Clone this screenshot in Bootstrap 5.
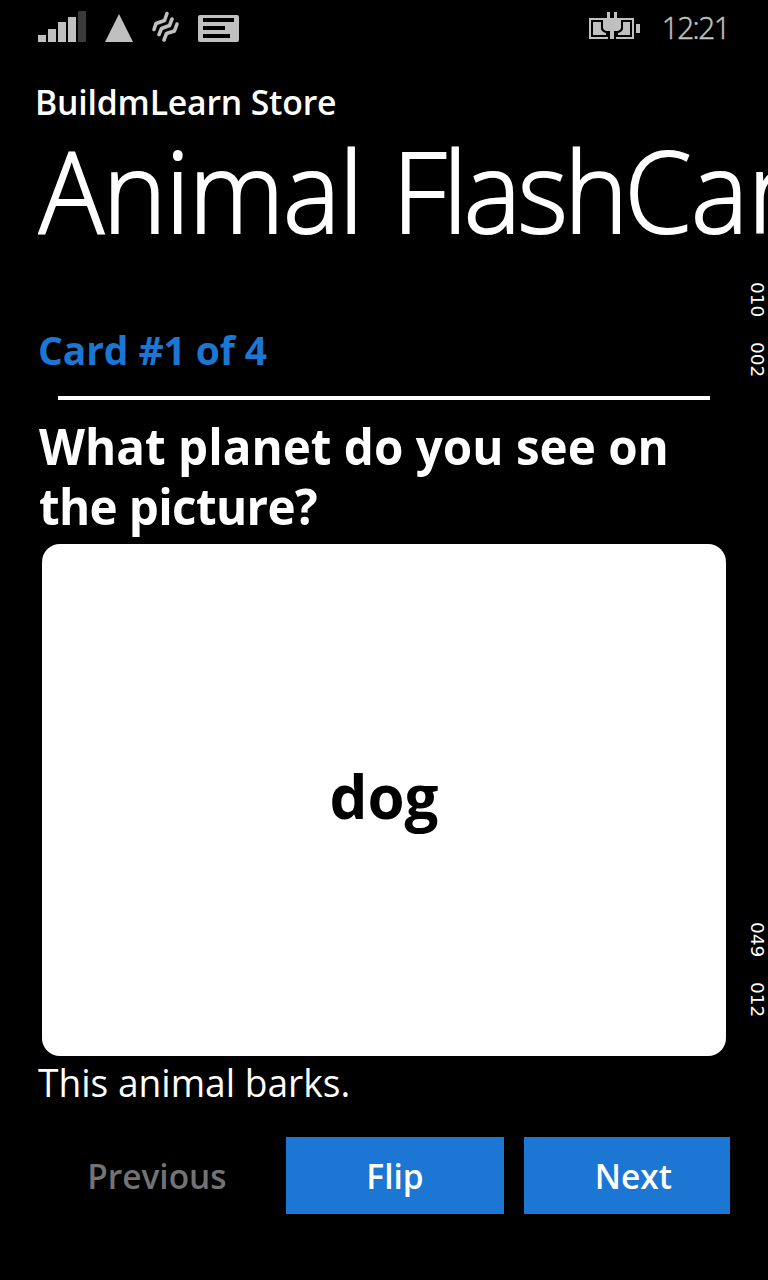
<!DOCTYPE html>
<html lang="en">
<head>
<meta charset="utf-8">
<meta name="viewport" content="width=device-width, initial-scale=1">
<title>BuildmLearn Store</title>
<link rel="stylesheet" href="https://cdn.jsdelivr.net/npm/bootstrap@5.3.0/dist/css/bootstrap.min.css">
<style>
body{background:#000;color:#fff;font-family:"Open Sans","Noto Sans",sans-serif}
.phone{width:768px;height:1280px}
.status-bar{height:54px;padding:0 40px 0 38px;color:#c0c0c0}
.clock{width:68px;margin-left:18px;font-size:31px;line-height:54px;font-weight:300;letter-spacing:-1.6px;-webkit-text-stroke:.5px #c0c0c0;transform:translateX(-1px) scaleX(.96);transform-origin:right}
.app-name{margin:28px 0 0 35px;font-size:35px;line-height:40px;font-weight:600;letter-spacing:-.2px;transform:scaleX(.965);transform-origin:left}
.page-title{margin:8px 0 0 39px;font-size:112px;line-height:120px;font-weight:300;letter-spacing:-1.2px;word-spacing:3px;-webkit-text-stroke:2px #fff;transform:scaleX(.965);transform-origin:left}
.page-title .tight{letter-spacing:-3.7px}
.page-title .loose{letter-spacing:-.5px}
.counter{margin:75px 0 0 38px;font-size:39px;line-height:50px;font-weight:700;color:#1b76d4;letter-spacing:-.1px}
.rule{margin:21px 58px 0;height:4px;background:#fff}
.question{margin:15px 0 0 39px;font-size:51px;line-height:60px;font-weight:700;transform:scaleX(.933);transform-origin:left}
.question .tight{letter-spacing:-.7px}
.flash{margin:9px 42px 0;padding-bottom:9px;height:512px;border-radius:18px;color:#000;font-size:60px;font-weight:700}
.hint{margin:0 0 0 38px;font-size:39px;line-height:51px;font-weight:400;transform:scaleX(.952);transform-origin:left}
.actions{margin:30px 38px 0;gap:20px}
.actions .btn{height:77px;padding:0;border:0;border-radius:0;font-size:35px;font-weight:600;line-height:76px}
.actions .btn span{display:inline-block;transform:scaleX(.955)}
.btn-tile,.btn-tile:hover{background:#1b76d4;color:#fff}
.btn-off:disabled{color:#737373;opacity:1}
.actions .w-prev{width:228px;padding-left:10px}
.w-flip{width:218px}
.actions .w-next{width:206px;padding-left:12px}
.counters{top:282px;right:1px;writing-mode:vertical-rl;font-family:"DejaVu Sans",sans-serif;font-size:18.5px;line-height:20px}
.counters span{position:absolute;right:0}
</style>
</head>
<body>
<div class="phone position-relative overflow-hidden">
  <div class="status-bar d-flex justify-content-between">
    <svg width="204" height="54" viewBox="38 0 204 54" fill="#c0c0c0">
      <path d="M38 35h8v7h-8zM48 29h8v13h-8zM58 22h8v20h-8zM68 17h8v25h-8z"/>
      <path fill="#3a3a3a" d="M78 11h8v31h-8z"/>
      <path d="M119 14L133 42H105z"/>
      <g fill="none" stroke="#c0c0c0" stroke-width="3.600" stroke-linecap="round" stroke-linejoin="round">
        <path d="M154 29.500L156 23.500L164.500 20.500L167 13.500M159 34.500L161.500 28.500L169.500 25.500L172 19M164 40L166.500 33.500L174.500 31L177 24"/>
      </g>
      <path fill-rule="evenodd" d="M200 15h37q2 0 2 2v23q0 2-2 2h-37q-2 0-2-2V17q0-2 2-2zM203 18v4h31v-4zM203 26v4h22v-4zM203 34v4h27v-4z"/>
    </svg>
    <div class="d-flex">
      <svg width="54" height="54" viewBox="588 0 54 54" fill="#c0c0c0">
        <path d="M589 18h14v2h-12v17h17v2h-19zM621 18h13v21h-18v-2h16V20h-11zM636 24h4v9h-4z"/>
        <path d="M593 22h8v7q1 3 5 4v2h-13zM630 22h-7v7q-1 3-5 4v2h12zM607 12h3v6h4v-6h3v6h4v10q-1 3-4 3h-3v8h-4v-8h-3q-3 0-4-3v-10h4z"/>
      </svg>
      <div class="clock text-end">12:21</div>
    </div>
  </div>
  <div class="app-name">BuildmLearn Store</div>
  <h1 class="page-title text-nowrap mb-0">Animal <span class="tight">Flash</span><span class="loose">Cards</span></h1>
  <div class="counter">Card #1 of 4</div>
  <div class="rule"></div>
  <h2 class="question mb-0">What planet do you see on<br><span class="tight">the picture?</span></h2>
  <div class="flash bg-white d-flex align-items-center justify-content-center"><span>dog</span></div>
  <p class="hint mb-0">This animal barks.</p>
  <div class="actions d-flex">
    <button class="btn btn-off w-prev" disabled><span>Previous</span></button>
    <button class="btn btn-tile w-flip"><span>Flip</span></button>
    <button class="btn btn-tile w-next"><span>Next</span></button>
  </div>
  <div class="counters position-absolute">
    <span style="top:0">010</span><span style="top:60px">002</span><span style="top:640px">049</span><span style="top:700px">012</span>
  </div>
</div>
<script src="https://cdn.jsdelivr.net/npm/bootstrap@5.3.0/dist/js/bootstrap.bundle.min.js"></script>
</body>
</html>
